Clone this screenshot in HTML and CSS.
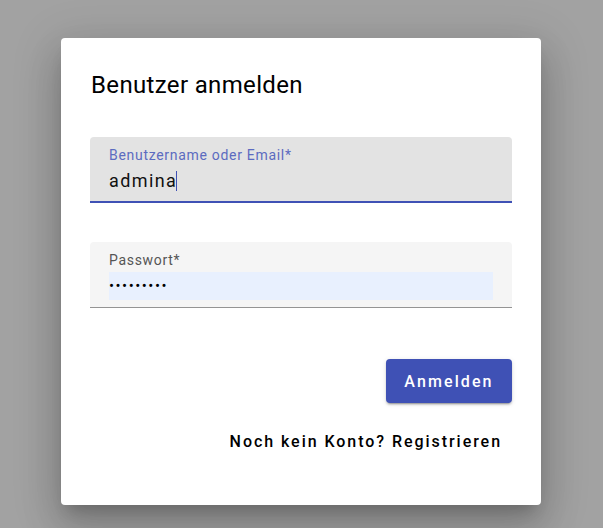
FILE: index.html
```html
<!DOCTYPE html>
<html lang="de">
<head>
<meta charset="utf-8">
<title>Benutzer anmelden</title>
<link rel="stylesheet" href="styles.css">
</head>
<body>
<div class="overlay">
  <div class="dialog">
    <h2 class="title">Benutzer anmelden</h2>
    <div class="field focused">
      <label class="label">Benutzername oder Email*</label>
      <div class="value">admina<span class="caret"></span></div>
    </div>
    <div class="field">
      <label class="label">Passwort*</label>
      <div class="autofill"><span class="dots">•••••••••</span></div>
    </div>
    <div class="actions">
      <button class="btn">Anmelden</button>
    </div>
    <div class="link-row">
      <span class="link">Noch kein Konto? Registrieren</span>
    </div>
  </div>
</div>
</body>
</html>
```
FILE: styles.css
```css
html, body {
  margin: 0;
  padding: 0;
  height: 100%;
  background: #a2a2a2;
  font-family: Roboto, "Liberation Sans", sans-serif;
}
.overlay {
  display: flex;
  padding-top: 38px;
  padding-left: 61px;
}
.dialog {
  width: 480px;
  height: 467px;
  box-sizing: border-box;
  background: #fff;
  border-radius: 4px;
  padding: 0 29px;
  box-shadow: 0 11px 15px -7px rgba(0,0,0,0.2), 0 24px 38px 3px rgba(0,0,0,0.14), 0 9px 46px 8px rgba(0,0,0,0.12);
}
.title {
  margin: 0;
  padding-top: 31px;
  height: 66px;
  box-sizing: border-box;
  font-size: 24px;
  line-height: 32px;
  font-weight: 400;
  letter-spacing: 0.35px;
  color: #000;
  padding-left: 1px;
}
.field {
  height: 66px;
  box-sizing: border-box;
  background: #f5f5f5;
  border-radius: 4px 4px 0 0;
  border-bottom: 1px solid #949494;
  padding: 9px 19px 0;
  margin-top: 33px;
}
.field + .field {
  margin-top: 39px;
}
.field.focused {
  background: #e3e3e3;
  border-bottom: 2px solid #3f51b5;
}
.label {
  display: block;
  font-size: 14px;
  line-height: 18px;
  letter-spacing: 0.7px;
  color: #555;
}
.focused .label {
  color: #5c6bc0;
}
.value {
  margin-top: 5px;
  font-size: 18px;
  line-height: 24px;
  letter-spacing: 1.4px;
  color: #111;
  display: flex;
  align-items: center;
}
.caret {
  display: inline-block;
  width: 1px;
  height: 20px;
  background: #3f51b5;
  margin-left: -1px;
}
.autofill {
  margin-top: 3px;
  background: #e8f0fe;
  height: 28px;
  display: flex;
  align-items: center;
}
.dots {
  font-size: 15px;
  letter-spacing: 1.5px;
  color: #000;
}
.actions {
  display: flex;
  justify-content: flex-end;
  margin-top: 51px;
}
.btn {
  width: 126px;
  height: 44px;
  background: #3f51b5;
  color: #fff;
  border: none;
  border-radius: 4px;
  font-family: Roboto, "Liberation Sans", sans-serif;
  font-size: 16px;
  font-weight: 500;
  letter-spacing: 2.1px;
  box-shadow: 0 3px 1px -2px rgba(0,0,0,0.2), 0 2px 2px 0 rgba(0,0,0,0.14), 0 1px 5px 0 rgba(0,0,0,0.12);
  padding: 0;
}
.link-row {
  display: flex;
  justify-content: flex-end;
  margin-top: 28px;
  padding-right: 10px;
}
.link {
  font-size: 16px;
  font-weight: 500;
  letter-spacing: 1.95px;
  color: #000;
  line-height: 22px;
}
```
